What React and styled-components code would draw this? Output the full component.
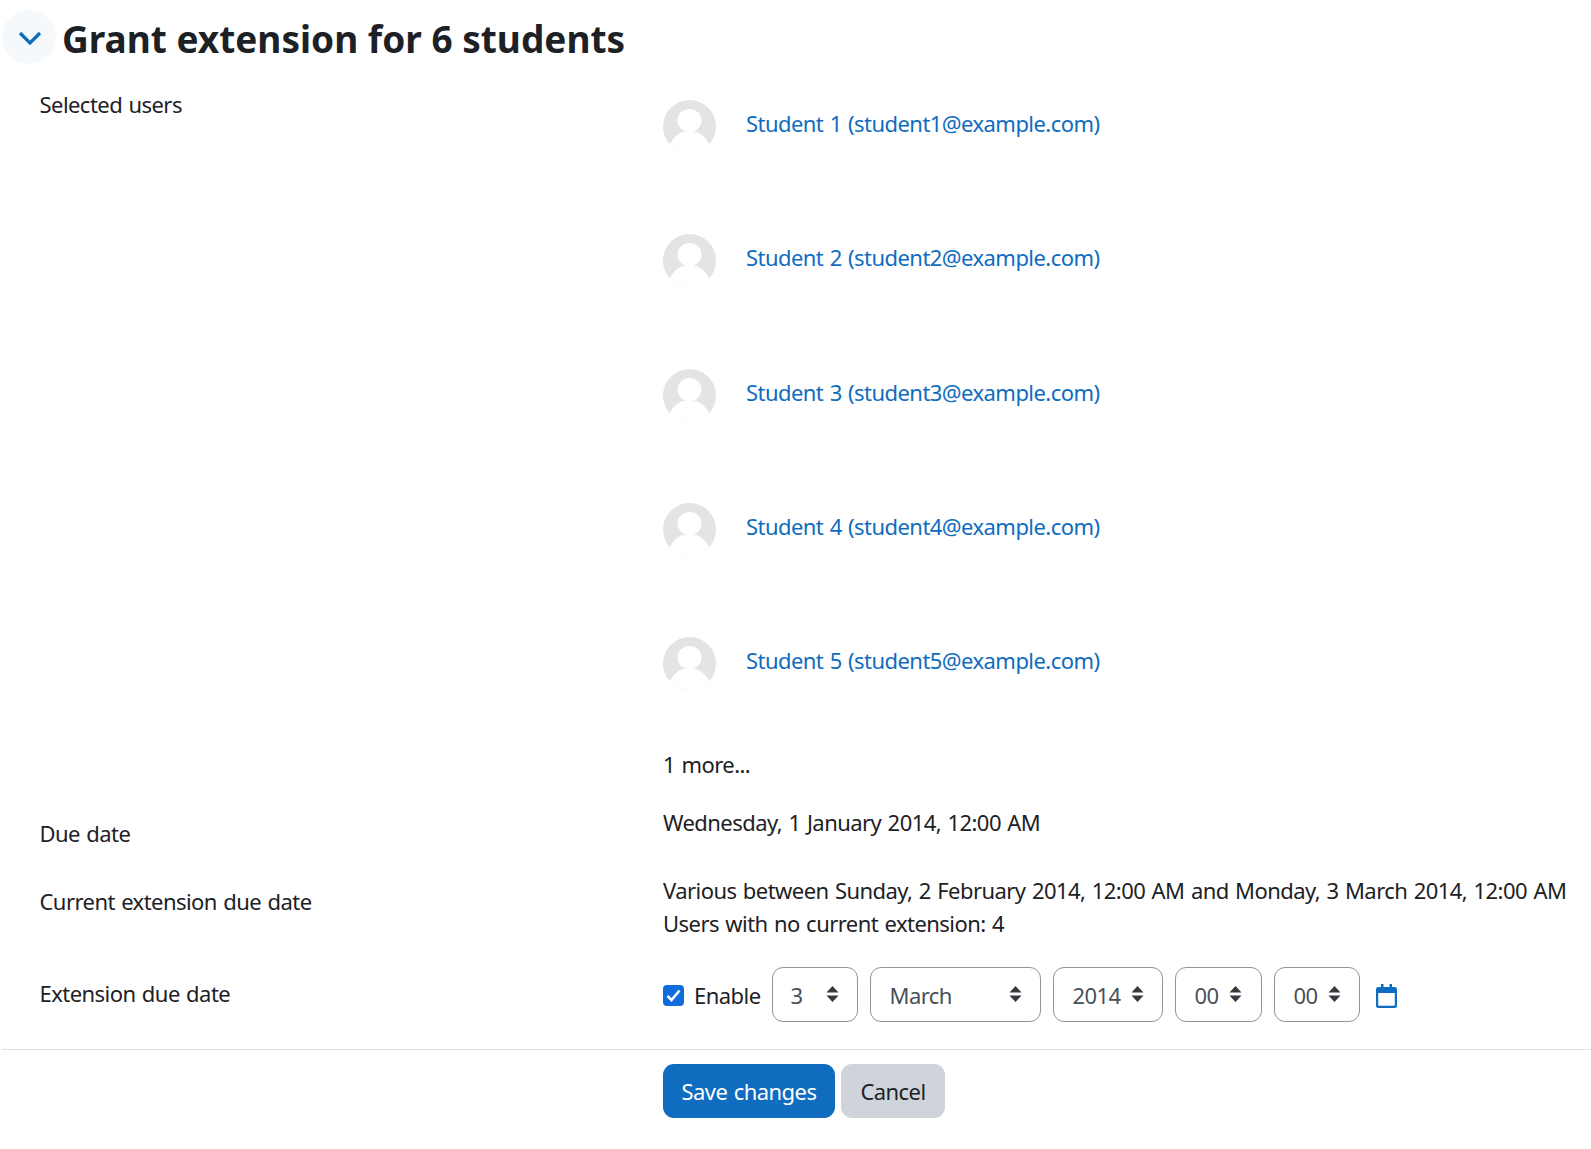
import React from "react";
import styled, { createGlobalStyle } from "styled-components";

const Global = createGlobalStyle`
  html, body { margin: 0; padding: 0; background: #fff; }
  body { font-family: "Noto Sans", "Open Sans", sans-serif; font-size: 22px; line-height: 33px; color: #1d2125; letter-spacing: -0.55px; word-spacing: 1.2px; }
`;
const Page = styled.div`width: 1591px; height: 1149px; overflow: hidden; padding-top: 10px; box-sizing: border-box;`;
const Header = styled.div`display: flex; align-items: center; gap: 6px; height: 54px; padding-left: 2px; margin-bottom: 24px;`;
const Toggle = styled.div`width: 54px; height: 54px; border-radius: 50%; background: #f5f9fc; display: flex; align-items: center; justify-content: center; color: #0f6cbf; padding: 1px 0 0 1px; box-sizing: border-box;`;
const Title = styled.h2`margin: 0; padding-top: 4px; font-size: 37px; line-height: 54px; font-weight: 700; letter-spacing: 0; word-spacing: 0;`;
const Row = styled.div`display: grid; grid-template-columns: 623.5px 1fr; padding-left: 39.5px; margin-bottom: ${p => p.$after || 0}px;`;
const Label = styled.div`padding-top: ${p => p.$top || 0}px;`;
const Field = styled.div`min-width: 0; white-space: nowrap;`;
const Users = styled.div`display: flex; flex-direction: column; gap: 80.25px; padding-top: 12px;`;
const User = styled.div`display: flex; align-items: center; gap: 29px; height: 54px;`;
const UserLink = styled.a`color: #0f6cbf; text-decoration: none; position: relative; top: -3.5px;`;
const More = styled.div`margin-top: 57px;`;
const Controls = styled.div`display: flex; align-items: center; height: 55px;`;
const Box = styled.span`width: 21px; height: 21px; border-radius: 4px; background: #0f6cdc; display: flex; align-items: center; justify-content: center; margin: 2px 10px 0 0; color: #fff;`;
const Enable = styled.span`margin: 2px 12px 0 0;`;
const SelectBox = styled.div`box-sizing: border-box; width: ${p => p.$w}px; height: 55px; margin-right: 12px; border: 1px solid #8f959e; border-radius: 11px; display: flex; align-items: center; justify-content: space-between; padding: 2px ${p => p.$r || 17}px 0 ${p => p.$l || 18}px; color: #495057;`;
const ArrowWrap = styled.span`display: flex; margin-top: -4px;`;
const CalendarWrap = styled.span`display: flex; margin: 2px 0 0 4px;`;
const Divider = styled.div`height: 1px; margin: 27px 0 14px 2px; background: #dee2e6;`;
const Actions = styled.div`display: flex; gap: 6px; padding-left: 663px;`;
const Button = styled.button`height: 54px; padding: 0 ${p => p.$pad}px; border: 0; border-radius: 11px; font: inherit; letter-spacing: inherit; word-spacing: inherit; background: ${p => p.$primary ? "#0f6cbf" : "#ced4da"}; color: ${p => p.$primary ? "#fff" : "#1d2125"};`;

const Avatar = () => (
  <svg width="54" height="54" viewBox="0 0 54 54">
    <defs><clipPath id="av"><circle cx="26.500" cy="26.500" r="26.500" /></clipPath></defs>
    <circle cx="26.500" cy="26.500" r="26.500" fill="#e4e4e4" />
    <g clipPath="url(#av)" fill="#fff">
      <ellipse cx="26.500" cy="20.500" rx="12" ry="11.500" />
      <path d="M5 48 C8 40 14 33 22 31.500 h9 C39 33 45 40 48 48 V54 H5 Z" />
    </g>
  </svg>
);
const Arrows = () => (
  <svg width="13" height="16" viewBox="0 0 13 16" fill="#343a40">
    <path d="M6.500 0 L12.500 6.500 H0.500 Z M0.500 9.500 H12.500 L6.500 16 Z" />
  </svg>
);
const Chevron = () => (
  <svg width="24" height="14" viewBox="0 0 24 14" fill="none" stroke="currentColor" strokeWidth="3.200">
    <path d="M2 2 L12 12 L22 2" />
  </svg>
);
const Calendar = () => (
  <svg width="21" height="24" viewBox="0 0 21 24">
    <path fill="#0f6cbf" d="M5 0h2.500v3h6V0H16v3h2.500A2.500 2.500 0 0 1 21 5.500v16a2.500 2.500 0 0 1-2.500 2.500h-16A2.500 2.500 0 0 1 0 21.500v-16A2.500 2.500 0 0 1 2.500 3H5zM2.200 9v12c0 .5.300.8.800.8h15c.5 0 .8-.3.8-.8V9z" />
  </svg>
);

const names = [1, 2, 3, 4, 5];
const selects = [
  { v: "3", w: 86, l: 17, r: 18 }, { v: "March", w: 171, l: 18, r: 18 }, { v: "2014", w: 110, r: 18 },
  { v: "00", w: 87, r: 19 }, { v: "00", w: 86, r: 18 },
];

export default function App() {
  return (
    <Page>
      <Global />
      <Header>
        <Toggle><Chevron /></Toggle>
        <Title>Grant extension for 6 students</Title>
      </Header>
      <Row $after={25}>
        <Label>Selected users</Label>
        <Field>
          <Users>
            {names.map(n => (
              <User key={n}>
                <Avatar />
                <UserLink href="#">Student {n} (student{n}@example.com)</UserLink>
              </User>
            ))}
          </Users>
          <More>1 more...</More>
        </Field>
      </Row>
      <Row $after={24}>
        <Label $top={11}>Due date</Label>
        <Field>Wednesday, 1 January 2014, 12:00 AM</Field>
      </Row>
      <Row $after={27}>
        <Label $top={11}>Current extension due date</Label>
        <Field>
          <div>Various between Sunday, 2 February 2014, 12:00 AM and Monday, 3 March 2014, 12:00 AM</div>
          <div>Users with no current extension: 4</div>
        </Field>
      </Row>
      <Row>
        <Label $top={10}>Extension due date</Label>
        <Controls>
          <Box>
            <svg width="15" height="13" viewBox="0 0 15 13" fill="none" stroke="currentColor" strokeWidth="2.600"><path d="M1.500 7 L5.500 11 L13.500 1.500" /></svg>
          </Box>
          <Enable>Enable</Enable>
          {selects.map((s, i) => (
            <SelectBox key={i} $w={s.w} $l={s.l} $r={s.r}>
              <span>{s.v}</span><ArrowWrap><Arrows /></ArrowWrap>
            </SelectBox>
          ))}
          <CalendarWrap><Calendar /></CalendarWrap>
        </Controls>
      </Row>
      <Divider />
      <Actions>
        <Button $primary $pad={18.5}>Save changes</Button>
        <Button $pad={19.5}>Cancel</Button>
      </Actions>
    </Page>
  );
}
